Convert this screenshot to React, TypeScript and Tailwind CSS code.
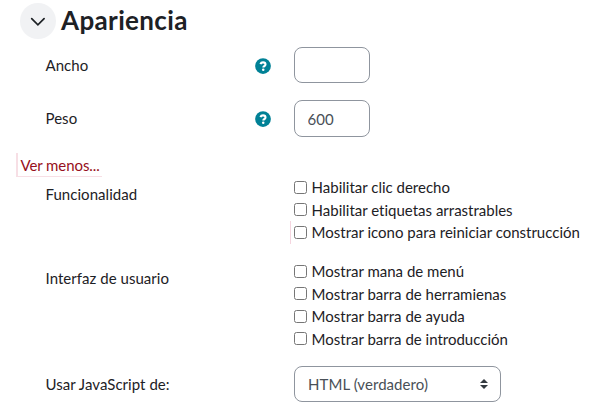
import React from "react";

function Help() {
  return (
    <svg className="mt-[11px] h-4 w-4 shrink-0" viewBox="0 0 512 512" fill="#008196">
      <circle cx="256" cy="256" r="252" />
      <path d="M174 195c14-38 42-56 82-56 49 0 79 25 79 65 0 31-18 46-43 61-20 12-25 19-25 39" fill="none" stroke="white" strokeWidth="68" />
      <circle cx="263" cy="372" r="40" fill="white" />
    </svg>
  );
}

function Check({ label, marked = false }: { label: string; marked?: boolean }) {
  return (
    <label className={`flex h-[22.5px] items-center whitespace-nowrap ${marked ? "-ml-1 border-l border-[#f5d5df] pl-[3px]" : ""}`}>
      <input type="checkbox" className="mr-[4.6px] h-[13px] w-[13px]" />
      {label}
    </label>
  );
}

function Row({ label, help = false, className, children }: { label: string; help?: boolean; className: string; children: React.ReactNode }) {
  return (
    <div className={`flex pl-[45.5px] ${className}`}>
      <div className="flex w-[248.5px] shrink-0 justify-between pr-[23.5px]">
        <span className="pt-[7px] tracking-[0.04px]">{label}</span>
        {help && <Help />}
      </div>
      {children}
    </div>
  );
}

export default function App() {
  return (
    <main className="h-[413px] w-[611px] overflow-hidden bg-white font-['Lato',sans-serif] text-[15px] leading-[22px] text-[#1d2125] [font-variant-ligatures:none]">
      <div className="flex h-[47px] items-start gap-[5px] pl-5 pt-[3px]">
        <span className="flex h-9 w-9 items-center justify-center rounded-full bg-[#f1f2f4]">
          <svg className="mt-px h-4 w-4" viewBox="0 0 16 16" fill="none" stroke="#1d2125" strokeWidth="1.7" strokeLinecap="round"><path d="m1.7 4.7 6.2 6.2 6.2-6.2" /></svg>
        </span>
        <h2 className="-mt-px text-[26px] font-bold leading-9 tracking-[0.36px]">Apariencia</h2>
      </div>
      <Row label="Ancho" help className="h-[53px]">
        <input aria-label="Ancho" className="h-9 w-[76px] rounded-lg border border-[#8f959e] px-3" />
      </Row>
      <Row label="Peso" help className="h-[54px]">
        <input aria-label="Peso" defaultValue="600" className="h-[37px] w-[76px] rounded-lg border border-[#8f959e] px-[12.5px] text-[#495057]" />
      </Row>
      <div className="h-[22px] pl-4">
        <a className="-mt-px inline-block h-6 border-b border-l-2 border-[#f7dfe5] pl-[2.5px] pr-0.5 pt-px tracking-[-0.08px] text-[#970f20]">Ver menos...</a>
      </div>
      <Row label="Funcionalidad" className="h-[84px]">
        <div>
          <Check label="Habilitar clic derecho" />
          <Check label="Habilitar etiquetas arrastrables" />
          <Check label="Mostrar icono para reiniciar construcción" marked />
        </div>
      </Row>
      <Row label="Interfaz de usuario" className="h-[106px]">
        <div className="-mt-[0.25px]">
          <Check label="Mostrar mana de menú" />
          <Check label="Mostrar barra de herramienas" />
          <Check label="Mostrar barra de ayuda" />
          <Check label="Mostrar barra de introducción" />
        </div>
      </Row>
      <Row label="Usar JavaScript de:" className="h-[47px]">
        <button className="flex h-9 w-[207px] items-center justify-between rounded-lg border border-[#8f959e] pl-[13px] pr-3 tracking-[0.06px] text-[#495057]">
          HTML (verdadero)
          <svg className="h-[10px] w-2" viewBox="0 0 4 5" fill="#343a40"><path d="M2 0 0 2h4zm0 5L0 3h4z" /></svg>
        </button>
      </Row>
    </main>
  );
}
